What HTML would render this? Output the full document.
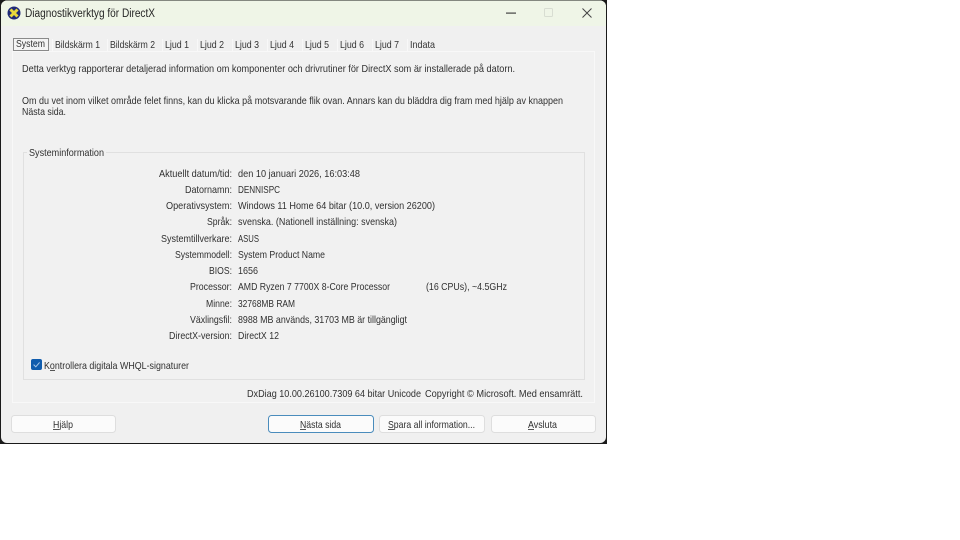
<!DOCTYPE html>
<html lang="sv">
<head>
<meta charset="utf-8">
<title>Diagnostikverktyg för DirectX</title>
<style>
html,body{margin:0;padding:0;background:#fff;width:960px;height:540px;overflow:hidden}
svg{display:block}
text{font-family:"Liberation Sans",sans-serif;font-size:10.5px;fill:#303030}
.t{font-size:11.5px;fill:#262626}
.tab{font-size:10.5px;fill:#333}
</style>
</head>
<body>
<svg width="960" height="540" viewBox="0 0 960 540" xmlns="http://www.w3.org/2000/svg">
<rect width="960" height="540" fill="#fff"/>
<!-- window -->
<rect x="0" y="0" width="607" height="444" fill="#1a1a1a"/>
<rect x="1" y="0.5" width="605" height="442.5" rx="6" fill="#f0f0f0"/>
<path d="M1 26V6.5A6 6 0 0 1 7 .5H600A6 6 0 0 1 606 6.5V26Z" fill="#eff5e7"/>
<!-- title icon -->
<circle cx="14" cy="13" r="6.5" fill="#1f2a78"/>
<path d="M10.5 9.5L17.5 16.5M17.5 9.5L10.5 16.5" stroke="#e8d83a" stroke-width="3"/>
<text class="t" x="25" y="17" textLength="130" lengthAdjust="spacingAndGlyphs">Diagnostikverktyg för DirectX</text>
<!-- caption buttons -->
<rect x="506" y="12.5" width="10" height="1.2" fill="#444"/>
<rect x="544.5" y="8.5" width="8" height="8" rx="1" fill="none" stroke="#d8ddd2"/>
<path d="M582.5 8.5L591.5 17.5M591.5 8.5L582.5 17.5" stroke="#444" stroke-width="1" fill="none"/>
<!-- tab panel -->
<rect x="12.5" y="51.5" width="582" height="351" fill="#f1f1f1" stroke="#f8f8f8"/>
<!-- tabs -->
<rect x="13.5" y="38.5" width="35" height="12" fill="#f4f4f4" stroke="#8a8a8a"/>
<path d="M52.5 39V51M107.5 39V51M162.5 39V51M197.5 39V51M232.5 39V51M267.5 39V51M302.5 39V51M337.5 39V51M372.5 39V51M407.5 39V51" stroke="#f8f8f8"/>
<g>
<text class="tab" x="16" y="47" textLength="29" lengthAdjust="spacingAndGlyphs">System</text>
<text class="tab" x="55" y="48" textLength="45" lengthAdjust="spacingAndGlyphs">Bildskärm 1</text>
<text class="tab" x="110" y="48" textLength="45" lengthAdjust="spacingAndGlyphs">Bildskärm 2</text>
<text class="tab" x="165" y="48" textLength="24" lengthAdjust="spacingAndGlyphs">Ljud 1</text>
<text class="tab" x="200" y="48" textLength="24" lengthAdjust="spacingAndGlyphs">Ljud 2</text>
<text class="tab" x="235" y="48" textLength="24" lengthAdjust="spacingAndGlyphs">Ljud 3</text>
<text class="tab" x="270" y="48" textLength="24" lengthAdjust="spacingAndGlyphs">Ljud 4</text>
<text class="tab" x="305" y="48" textLength="24" lengthAdjust="spacingAndGlyphs">Ljud 5</text>
<text class="tab" x="340" y="48" textLength="24" lengthAdjust="spacingAndGlyphs">Ljud 6</text>
<text class="tab" x="375" y="48" textLength="24" lengthAdjust="spacingAndGlyphs">Ljud 7</text>
<text class="tab" x="410" y="48" textLength="25" lengthAdjust="spacingAndGlyphs">Indata</text>
</g>
<!-- intro -->
<text x="22" y="72" textLength="493" lengthAdjust="spacingAndGlyphs">Detta verktyg rapporterar detaljerad information om komponenter och drivrutiner för DirectX som är installerade på datorn.</text>
<text x="22" y="104" textLength="541" lengthAdjust="spacingAndGlyphs">Om du vet inom vilket område felet finns, kan du klicka på motsvarande flik ovan. Annars kan du bläddra dig fram med hjälp av knappen</text>
<text x="22" y="115" textLength="44" lengthAdjust="spacingAndGlyphs">Nästa sida.</text>
<!-- group -->
<rect x="23.5" y="152.5" width="561" height="227" fill="none" stroke="#e0e0e0"/>
<rect x="27" y="150" width="79" height="6" fill="#f1f1f1"/>
<text x="29" y="156" textLength="75" lengthAdjust="spacingAndGlyphs">Systeminformation</text>
<!-- labels -->
<text x="159" y="177" textLength="73" lengthAdjust="spacingAndGlyphs">Aktuellt datum/tid:</text>
<text x="185" y="193" textLength="47" lengthAdjust="spacingAndGlyphs">Datornamn:</text>
<text x="166" y="209" textLength="66" lengthAdjust="spacingAndGlyphs">Operativsystem:</text>
<text x="207" y="225" textLength="25" lengthAdjust="spacingAndGlyphs">Språk:</text>
<text x="161" y="242" textLength="71" lengthAdjust="spacingAndGlyphs">Systemtillverkare:</text>
<text x="175" y="258" textLength="57" lengthAdjust="spacingAndGlyphs">Systemmodell:</text>
<text x="209" y="274" textLength="23" lengthAdjust="spacingAndGlyphs">BIOS:</text>
<text x="190" y="290" textLength="42" lengthAdjust="spacingAndGlyphs">Processor:</text>
<text x="206" y="307" textLength="26" lengthAdjust="spacingAndGlyphs">Minne:</text>
<text x="190" y="323" textLength="42" lengthAdjust="spacingAndGlyphs">Växlingsfil:</text>
<text x="169" y="339" textLength="63" lengthAdjust="spacingAndGlyphs">DirectX-version:</text>
<!-- values -->
<text x="238" y="177" textLength="122" lengthAdjust="spacingAndGlyphs">den 10 januari 2026, 16:03:48</text>
<text x="238" y="193" textLength="42" lengthAdjust="spacingAndGlyphs">DENNISPC</text>
<text x="238" y="209" textLength="197" lengthAdjust="spacingAndGlyphs">Windows 11 Home 64 bitar (10.0, version 26200)</text>
<text x="238" y="225" textLength="159" lengthAdjust="spacingAndGlyphs">svenska. (Nationell inställning: svenska)</text>
<text x="238" y="242" textLength="21" lengthAdjust="spacingAndGlyphs">ASUS</text>
<text x="238" y="258" textLength="87" lengthAdjust="spacingAndGlyphs">System Product Name</text>
<text x="238" y="274" textLength="20" lengthAdjust="spacingAndGlyphs">1656</text>
<text x="238" y="290" textLength="152" lengthAdjust="spacingAndGlyphs">AMD Ryzen 7 7700X 8-Core Processor</text>
<text x="426" y="290" textLength="81" lengthAdjust="spacingAndGlyphs">(16 CPUs), ~4.5GHz</text>
<text x="238" y="307" textLength="57" lengthAdjust="spacingAndGlyphs">32768MB RAM</text>
<text x="238" y="323" textLength="169" lengthAdjust="spacingAndGlyphs">8988 MB används, 31703 MB är tillgängligt</text>
<text x="238" y="339" textLength="41" lengthAdjust="spacingAndGlyphs">DirectX 12</text>
<!-- checkbox -->
<rect x="31" y="359" width="11" height="11" rx="2" fill="#0f5cad"/>
<path d="M33.6 364.6L35.8 366.8L39.6 362.4" fill="none" stroke="#a9c8e8" stroke-width="1"/>
<text x="44" y="369" textLength="145" lengthAdjust="spacingAndGlyphs">Kontrollera digitala WHQL-signaturer</text>
<rect x="50" y="370" width="5" height="1" fill="#555"/>
<!-- version -->
<text x="247" y="397" textLength="174" lengthAdjust="spacingAndGlyphs">DxDiag 10.00.26100.7309 64 bitar Unicode</text>
<text x="425" y="397" textLength="158" lengthAdjust="spacingAndGlyphs">Copyright © Microsoft. Med ensamrätt.</text>
<!-- buttons -->
<rect x="11.5" y="415.5" width="104" height="17" rx="3" fill="#fbfbfb" stroke="#dedede"/>
<rect x="268.5" y="415.5" width="105" height="17" rx="3" fill="#fbfbfb" stroke="#4a8cbc"/>
<rect x="379.5" y="415.5" width="105" height="17" rx="3" fill="#fbfbfb" stroke="#dedede"/>
<rect x="491.5" y="415.5" width="104" height="17" rx="3" fill="#fbfbfb" stroke="#dedede"/>
<text x="53" y="428" textLength="20" lengthAdjust="spacingAndGlyphs">Hjälp</text>
<rect x="53" y="429" width="6" height="1" fill="#555"/>
<text x="300" y="428" textLength="41" lengthAdjust="spacingAndGlyphs">Nästa sida</text>
<rect x="300" y="429" width="6" height="1" fill="#555"/>
<text x="388" y="428" textLength="87" lengthAdjust="spacingAndGlyphs">Spara all information...</text>
<rect x="388" y="429" width="6" height="1" fill="#555"/>
<text x="528" y="428" textLength="29" lengthAdjust="spacingAndGlyphs">Avsluta</text>
<rect x="528" y="429" width="6" height="1" fill="#555"/>
</svg>
</body>
</html>
